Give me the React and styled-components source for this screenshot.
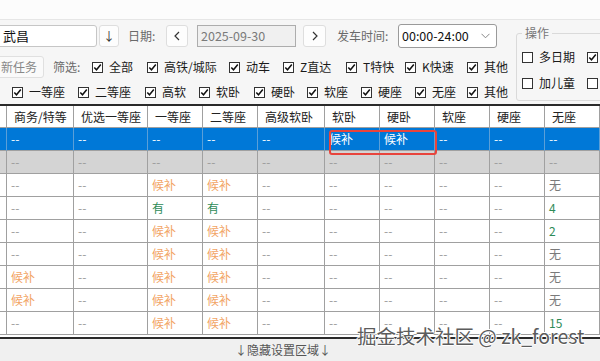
import React from 'react';
import styled, { createGlobalStyle } from 'styled-components';

/* ================= DATA ================= */

const HEADERS = ['商务/特等', '优选一等座', '一等座', '二等座', '高级软卧', '软卧', '硬卧', '软座', '硬座', '无座'];

const D = '--';

const ROWS = [
  { kind: 'selected', cells: [D, D, D, D, D, '候补', '候补', D, D, D] },
  { kind: 'muted', cells: [D, D, D, D, D, D, D, D, D, D] },
  { kind: 'plain', cells: [D, D, '候补', '候补', D, D, D, D, D, '无'] },
  { kind: 'plain', cells: [D, D, '有', '有', D, D, D, D, D, '4'] },
  { kind: 'plain', cells: [D, D, '候补', '候补', D, D, D, D, D, '2'] },
  { kind: 'plain', cells: [D, D, '候补', '候补', D, D, D, D, D, '无'] },
  { kind: 'plain', cells: ['候补', D, '候补', '候补', D, D, D, D, D, '无'] },
  { kind: 'plain', cells: ['候补', D, '候补', '候补', D, D, D, D, D, '无'] },
  { kind: 'plain', cells: [D, D, '候补', '候补', D, D, D, D, D, '15'] },
];

const TRAIN_TYPES = [
  { label: '全部', w: 55 },
  { label: '高铁/城际', w: 82 },
  { label: '动车', w: 54 },
  { label: 'Z直达', w: 63 },
  { label: 'T特快', w: 59 },
  { label: 'K快速', w: 62 },
  { label: '其他', w: 44 },
];

const SEAT_TYPES = [
  { label: '一等座', w: 66 },
  { label: '二等座', w: 67 },
  { label: '高软', w: 54 },
  { label: '软卧', w: 55 },
  { label: '硬卧', w: 53 },
  { label: '软座', w: 54 },
  { label: '硬座', w: 54 },
  { label: '无座', w: 52 },
  { label: '其他', w: 44 },
];

const ROW_THEME = {
  selected: { bg: '#0078d7', line: '#5a9fd8' },
  muted: { bg: '#d4d4d4', line: '#a0a0a0' },
  plain: { bg: '#ffffff', line: '#a0a0a0' },
};

const valueColor = (v, kind) => {
  if (kind === 'selected') return '#ffffff';
  if (v === '候补') return '#f2a464';
  if (v === '有' || /^\d+$/.test(v)) return '#2e8b57';
  if (v === '无') return '#7a7a7a';
  return '#9a9a9a';
};

/* ================= PARTS ================= */

function CheckMark() {
  return (
    <svg width="9" height="9" viewBox="0 0 9 9">
      <path d="M1.3 4.4 L3.5 6.8 L7.8 1.6" fill="none" stroke="#111" strokeWidth="1.5" />
    </svg>
  );
}

function Check({ label, checked = true, w }) {
  return (
    <CheckItem $w={w}>
      <Box>{checked && <CheckMark />}</Box>
      {label && <span>{label}</span>}
    </CheckItem>
  );
}

/* ================= COMPONENT ================= */

export default function App() {
  return (
    <Page>
      <GlobalStyle />
      <TopStrip />

      {/* ===== SETTINGS ===== */}
      <Settings>
        <LeftArea>
          <Row1>
            <TextInput>武昌</TextInput>
            <SmallButton $w={20} $ml={2}>↓</SmallButton>
            <FieldLabel $w={38} $ml={9}>日期:</FieldLabel>
            <SmallButton $w={22}>
              <svg width="8" height="10" viewBox="0 0 8 10">
                <polyline points="6,1 2,5 6,9" fill="none" stroke="#333" strokeWidth="1.2" />
              </svg>
            </SmallButton>
            <DateInput>2025-09-30</DateInput>
            <SmallButton $w={23} $ml={7}>
              <svg width="8" height="10" viewBox="0 0 8 10">
                <polyline points="2,1 6,5 2,9" fill="none" stroke="#333" strokeWidth="1.2" />
              </svg>
            </SmallButton>
            <FieldLabel $w={61} $ml={11}>发车时间:</FieldLabel>
            <Select>
              <span>00:00-24:00</span>
              <svg width="9" height="6" viewBox="0 0 9 6">
                <polyline points="0.5,0.8 4.5,4.8 8.5,0.8" fill="none" stroke="#888" strokeWidth="1" />
              </svg>
            </Select>
          </Row1>

          <Row2>
            <TaskButton>新任务</TaskButton>
            <FieldLabel $w={39} $ml={9}>筛选:</FieldLabel>
            {TRAIN_TYPES.map((t) => (
              <Check key={t.label} label={t.label} w={t.w} />
            ))}
          </Row2>

          <Row3>
            {SEAT_TYPES.map((t) => (
              <Check key={t.label} label={t.label} w={t.w} />
            ))}
          </Row3>
        </LeftArea>

        <GroupBox>
          <Legend>操作</Legend>
          <GroupGrid>
            <Check label="多日期" checked={false} />
            <Check checked />
            <Check label="加儿童" checked={false} />
            <Check checked={false} />
          </GroupGrid>
        </GroupBox>
      </Settings>

      {/* ===== TABLE ===== */}
      <TableWrap>
        <GridRow $h={22} $bg="#fff" $line="#a0a0a0">
          <Cell />
          {HEADERS.map((h) => (
            <HeadCell key={h}>{h}</HeadCell>
          ))}
        </GridRow>

        {ROWS.map((r, i) => {
          const t = ROW_THEME[r.kind];
          return (
            <GridRow key={i} $h={23} $bg={t.bg} $line={t.line}>
              <Cell />
              {r.cells.map((v, j) => (
                <Cell key={j} style={{ color: valueColor(v, r.kind) }}>
                  {v}
                </Cell>
              ))}
            </GridRow>
          );
        })}

        <Highlight />
      </TableWrap>

      <BottomBar>↓隐藏设置区域↓</BottomBar>

      <Watermark>掘金技术社区 @ zk_forest</Watermark>
    </Page>
  );
}

/* ================= STYLES ================= */

const GlobalStyle = createGlobalStyle`
  html, body {
    margin: 0;
    padding: 0;
    background: #fff;
  }
  body {
    font-family: "Noto Sans CJK SC", "Noto Sans", sans-serif;
    font-size: 12px;
    color: #222;
  }
  * {
    box-sizing: border-box;
  }
`;

const Page = styled.div`
  position: relative;
  width: 600px;
  height: 361px;
  overflow: hidden;
  display: flex;
  flex-direction: column;
  line-height: 16px;
`;

const TopStrip = styled.div`
  height: 20px;
  flex-shrink: 0;
  background: #fcfcfc;
  border-bottom: 1px solid #e6e6e6;
`;

const Settings = styled.div`
  height: 84px;
  flex-shrink: 0;
  display: flex;
  background: #f6f6f6;
`;

const LeftArea = styled.div`
  width: 510px;
  flex-shrink: 0;
  display: flex;
  flex-direction: column;
`;

const rowBase = `
  display: flex;
  align-items: center;
  white-space: nowrap;
`;

const Row1 = styled.div`
  ${rowBase};
  margin-top: 5px;
  height: 22px;
`;

const Row2 = styled.div`
  ${rowBase};
  margin-top: 9px;
  height: 22px;
`;

const Row3 = styled.div`
  ${rowBase};
  margin-top: 4px;
  height: 20px;
  padding-left: 12px;
`;

const TextInput = styled.div`
  margin-left: -6px;
  width: 103px;
  height: 22px;
  flex-shrink: 0;
  display: flex;
  align-items: center;
  padding-left: 8px;
  background: #fff;
  border: 1px solid #c6c6c6;
  border-radius: 3px;
  font-size: 13px;
  color: #111;
`;

const SmallButton = styled.div`
  width: ${({ $w }) => $w}px;
  margin-left: ${({ $ml = 0 }) => $ml}px;
  height: 22px;
  flex-shrink: 0;
  display: flex;
  align-items: center;
  justify-content: center;
  background: #fdfdfd;
  border: 1px solid #dedede;
  border-radius: 3px;
  color: #333;
  font-size: 12px;
`;

const FieldLabel = styled.div`
  width: ${({ $w }) => $w}px;
  margin-left: ${({ $ml = 0 }) => $ml}px;
  flex-shrink: 0;
  color: #6a6a6a;
  font-size: 12px;
`;

const DateInput = styled.div`
  margin-left: 9px;
  width: 99px;
  height: 22px;
  flex-shrink: 0;
  display: flex;
  align-items: center;
  padding-left: 3px;
  background: #f0f0f0;
  border: 1px solid #adadad;
  color: #7a7a7a;
  font-size: 12.5px;
`;

const Select = styled.div`
  width: 99px;
  height: 24px;
  flex-shrink: 0;
  display: flex;
  align-items: center;
  justify-content: space-between;
  padding: 0 6px 0 3px;
  background: #fff;
  border: 1px solid #9a9a9a;
  border-radius: 3px;
  color: #111;
  font-size: 12.5px;
`;

const TaskButton = styled.div`
  margin-left: -6px;
  width: 50px;
  height: 22px;
  flex-shrink: 0;
  display: flex;
  align-items: center;
  padding-left: 6px;
  background: #fafafa;
  border: 1px solid #e0e0e0;
  border-radius: 3px;
  color: #888;
`;

const CheckItem = styled.div`
  width: ${({ $w }) => ($w ? `${$w}px` : 'auto')};
  flex-shrink: 0;
  display: flex;
  align-items: center;
  gap: 6px;
  color: #1a1a1a;
  font-size: 12px;
`;

const Box = styled.span`
  width: 11px;
  height: 11px;
  flex-shrink: 0;
  display: inline-flex;
  align-items: center;
  justify-content: center;
  background: #fff;
  border: 1px solid #333;
`;

const GroupBox = styled.fieldset`
  margin: 6px 0 0 6px;
  width: 100px;
  height: 75px;
  flex-shrink: 0;
  padding: 0 0 0 5px;
  border: 1px solid #dadada;
  border-radius: 3px;
`;

const Legend = styled.legend`
  padding: 0 3px;
  font-size: 12px;
  line-height: 14px;
  color: #777;
`;

const GroupGrid = styled.div`
  margin-top: 4px;
  display: grid;
  grid-template-columns: 65px 65px;
  grid-auto-rows: 26px;
  align-items: center;
`;

const TableWrap = styled.div`
  position: relative;
  height: 235px;
  flex-shrink: 0;
  overflow: hidden;
  background: #fff;
  border-top: 2px solid #2a2a2a;
  border-bottom: 2px solid #2a2a2a;
`;

const GridRow = styled.div`
  display: grid;
  grid-template-columns: 7px 67px 74px 55px 55px 67px 55px 55px 55px 55px 55px;
  height: ${({ $h }) => $h}px;
  background: ${({ $bg }) => $bg};

  & > * {
    border-right: 1px solid ${({ $line }) => $line};
    border-bottom: 1px solid #a0a0a0;
  }
`;

const Cell = styled.div`
  display: flex;
  align-items: center;
  padding-left: 4px;
  white-space: nowrap;
  overflow: hidden;
  font-size: 12px;
`;

const HeadCell = styled(Cell)`
  padding-left: 7px;
  color: #222;
`;

const Highlight = styled.div`
  position: absolute;
  left: 329px;
  top: 24px;
  width: 108px;
  height: 25px;
  border: 2px solid #e8443c;
  border-radius: 3px;
`;

const BottomBar = styled.div`
  flex: 1;
  display: flex;
  align-items: center;
  padding-left: 235px;
  background: #f0f0f0;
  color: #555;
  font-size: 12px;
`;

const Watermark = styled.div`
  position: absolute;
  left: 357px;
  top: 324px;
  font-size: 19.5px;
  line-height: 24px;
  white-space: nowrap;
  color: #5c5c5c;
  text-shadow: 1px 0 0 #fff, -1px 0 0 #fff, 0 1px 0 #fff, 0 -1px 0 #fff;
`;
